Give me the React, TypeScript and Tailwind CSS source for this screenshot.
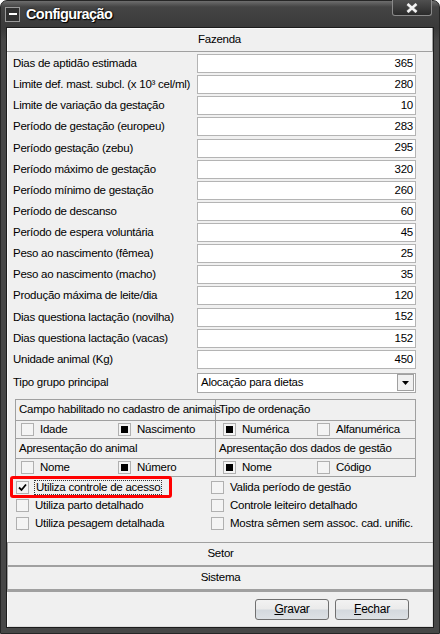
import React from "react";

const FIELDS: [string, string][] = [
  ["Dias de aptidão estimada", "365"],
  ["Limite def. mast. subcl. (x 10³ cel/ml)", "280"],
  ["Limite de variação da gestação", "10"],
  ["Período de gestação (europeu)", "283"],
  ["Período gestação (zebu)", "295"],
  ["Período máximo de gestação", "320"],
  ["Período mínimo de gestação", "260"],
  ["Período de descanso", "60"],
  ["Período de espera voluntária", "45"],
  ["Peso ao nascimento (fêmea)", "25"],
  ["Peso ao nascimento (macho)", "35"],
  ["Produção máxima de leite/dia", "120"],
  ["Dias questiona lactação (novilha)", "152"],
  ["Dias questiona lactação (vacas)", "152"],
  ["Unidade animal (Kg)", "450"],
];

function Box({ mark }: { mark?: "dot" | "check" }) {
  return (
    <span className="w-[13px] h-[13px] shrink-0 border border-[#b0b0b0] bg-[#f4f4f4] flex items-center justify-center">
      {mark === "dot" && <span className="w-[7px] h-[7px] bg-black" />}
      {mark === "check" && (
        <svg width="9" height="9" viewBox="0 0 9 9">
          <path d="M1 4.5 L3.5 7 L8 1.5" stroke="#000" strokeWidth="1.8" fill="none" />
        </svg>
      )}
    </span>
  );
}

function Opt({ label, mark, w }: { label: string; mark?: "dot" | "check"; w?: string }) {
  return (
    <div className={`flex items-center gap-[6px] whitespace-nowrap ${w ?? ""}`}>
      <Box mark={mark} />
      <span>{label}</span>
    </div>
  );
}

function SectionBar({ title, top, bottom }: { title: string; top: string; bottom: string }) {
  return (
    <div className={`h-[25px] flex items-center justify-center border-l border-[#a0a0a0] ${top} ${bottom}`}>
      {title}
    </div>
  );
}

function WinButton({ first, rest }: { first: string; rest: string }) {
  return (
    <button className="w-[74px] h-[21px] rounded-[3px] border border-[#707070] bg-[linear-gradient(#f2f2f2_0%,#ebebeb_45%,#d4d9de_55%,#dde1e5_100%)] text-[12px] text-black flex items-center justify-center">
      <span className="underline">{first}</span>
      {rest}
    </button>
  );
}

export default function App() {
  return (
    <div className="w-[440px] h-[634px] flex flex-col rounded-t-[7px] bg-[linear-gradient(#6e6e6e_0px,#444_6px,#3a3a3a_27px,#474747_40px,#474747_100%)] border border-[#262626] font-['Liberation_Sans',Arial,sans-serif] text-[11.5px] tracking-[-0.26px] text-black">
      {/* title bar */}
      <div className="h-[26px] flex items-center relative">
        <span className="ml-[4px] w-[15px] h-[15px] border border-[#9a9a9a] bg-[#303030] flex items-center justify-center">
          <span className="w-[8px] h-[2px] bg-white" />
        </span>
        <span className="ml-[6px] mt-px text-[14.5px] font-bold text-white tracking-[-0.6px] [text-shadow:0_0_2px_#000,1px_1px_1px_#000]">
          Configuração
        </span>
        <div className="absolute right-[7px] -top-px w-[40px] h-[16px] border border-[#8a8a8a] border-t-0 rounded-b-[3px] bg-[linear-gradient(#505050,#2a2a2a)] flex items-center justify-center">
          <svg width="14" height="10" viewBox="0 0 14 10">
            <path d="M2.5 1 L11.5 9 M11.5 1 L2.5 9" stroke="#5a5a5a" strokeWidth="4" />
            <path d="M2.5 1 L11.5 9 M11.5 1 L2.5 9" stroke="#f4f4f4" strokeWidth="2.4" />
          </svg>
        </div>
      </div>

      {/* client area */}
      <div className="flex-1 mx-[5px] mb-[5px] border border-[#1c1c1c] flex flex-col bg-[#f0f0f0] shadow-[inset_1px_1px_0_#fafafa,inset_-1px_-1px_0_#dcdcdc]">
        <div className="h-[24px] shrink-0 flex items-center justify-center border-b border-[#a0a0a0] border-r">
          Fazenda
        </div>

        <div className="pl-[6px] pr-[17px] pt-[2px]">
          {FIELDS.map(([label, value]) => (
            <div key={label} className="h-[21.14px] flex items-start">
              <span className="w-[184px] leading-[19px] whitespace-nowrap">{label}</span>
              <div className="flex-1 h-[19px] bg-white border border-[#b4b4b4] flex items-center justify-end pr-[2px]">
                {value}
              </div>
            </div>
          ))}

          <div className="mt-[2px] h-[20px] flex items-center">
            <span className="w-[184px] leading-[19px]">Tipo grupo principal</span>
            <div className="flex-1 h-[20px] bg-white border border-[#a8a8a8] flex items-center pl-[3px] pr-px">
              <span className="flex-1">Alocação para dietas</span>
              <span className="w-[17px] h-[17px] border border-[#a0a0a0] bg-[#f0f0f0] flex items-center justify-center">
                <svg width="7" height="4" viewBox="0 0 7 4">
                  <path d="M0 0 H7 L3.5 4 Z" fill="#000" />
                </svg>
              </span>
            </div>
          </div>

          {/* option groups */}
          <div className="mt-[6px] ml-[2px] grid grid-cols-2 border-l border-t border-[#a0a0a0]">
            <div className="h-[21px] border-r border-b border-[#a0a0a0] flex items-center pl-[3px] whitespace-nowrap">
              Campo habilitado no cadastro de animais
            </div>
            <div className="h-[21px] border-r border-b border-[#a0a0a0] flex items-center pl-[3px]">
              Tipo de ordenação
            </div>
            <div className="h-[18px] border-r border-b border-[#a0a0a0] flex items-center pl-[5px]">
              <Opt label="Idade" w="w-[97px]" />
              <Opt label="Nascimento" mark="dot" />
            </div>
            <div className="h-[18px] border-r border-b border-[#a0a0a0] flex items-center pl-[7px]">
              <Opt label="Numérica" mark="dot" w="w-[94px]" />
              <Opt label="Alfanumérica" />
            </div>
            <div className="h-[20px] border-r border-b border-[#a0a0a0] flex items-center pl-[3px]">
              Apresentação do animal
            </div>
            <div className="h-[20px] border-r border-b border-[#a0a0a0] flex items-center pl-[3px]">
              Apresentação dos dados de gestão
            </div>
            <div className="h-[18px] border-r border-b border-[#a0a0a0] flex items-center pl-[5px]">
              <Opt label="Nome" w="w-[97px]" />
              <Opt label="Número" mark="dot" />
            </div>
            <div className="h-[18px] border-r border-b border-[#a0a0a0] flex items-center pl-[7px]">
              <Opt label="Nome" mark="dot" w="w-[94px]" />
              <Opt label="Código" />
            </div>
          </div>

          <div className="mt-[2px] ml-[3px] grid grid-cols-[195px_1fr]">
            <div className="h-[18px] flex items-center relative">
              <Box mark="check" />
              <span className="ml-[5px] px-px border border-dotted border-[#333] leading-[13px] whitespace-nowrap">
                Utiliza controle de acesso
              </span>
              <span className="absolute left-[-6px] top-[-3px] w-[162px] h-[22px] border-[3px] border-[#ff0000] rounded-[3px]" />
            </div>
            <Opt label="Valida período de gestão" w="h-[18px]" />
            <Opt label="Utiliza parto detalhado" w="h-[18px]" />
            <Opt label="Controle leiteiro detalhado" w="h-[18px]" />
            <Opt label="Utiliza pesagem detalhada" w="h-[18px]" />
            <Opt label="Mostra sêmen sem assoc. cad. unific." w="h-[18px]" />
          </div>
        </div>

        <div className="mt-[9px]">
          <SectionBar title="Setor" top="border-t border-[#a0a0a0]" bottom="border-b-2 border-b-[#a0a0a0]" />
          <SectionBar title="Sistema" top="" bottom="border-b-[3px] border-b-[#a0a0a0]" />
        </div>

        <div className="flex-1 flex items-start justify-end gap-[6px] pt-[7px] pr-[24px]">
          <WinButton first="G" rest="ravar" />
          <WinButton first="F" rest="echar" />
        </div>
      </div>
    </div>
  );
}
